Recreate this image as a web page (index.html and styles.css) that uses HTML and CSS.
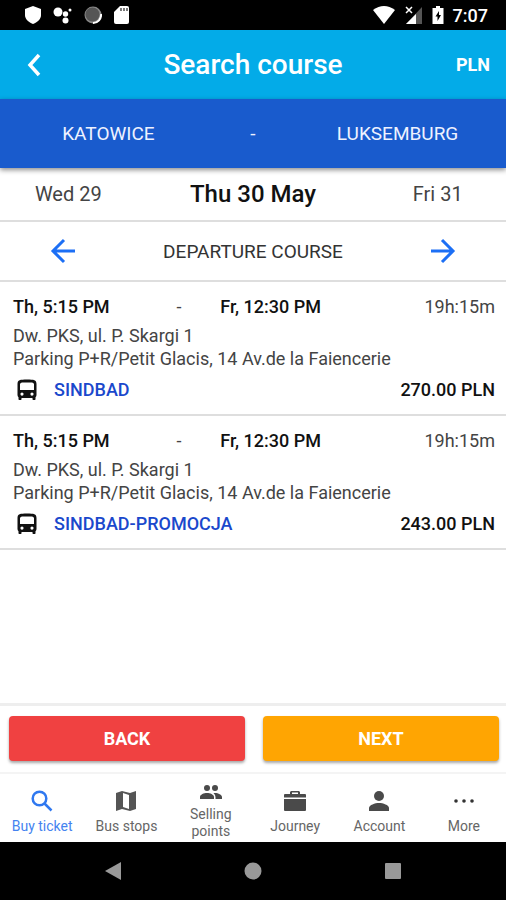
FILE: index.html
```html
<!DOCTYPE html>
<html lang="en">
<head>
<meta charset="utf-8">
<meta name="viewport" content="width=device-width, initial-scale=1">
<title>Search course</title>
<link rel="stylesheet" href="styles.css">
</head>
<body>
<div class="status">
  <div class="status-group">
    <svg width="18" height="20" viewBox="0 0 18 20"><path fill="#fff" d="M9 1l8 3v6c0 4-3 7-8 9-5-2-8-5-8-9V4z"/></svg>
    <svg width="20" height="18" viewBox="0 0 20 18"><g fill="#fff"><circle cx="5" cy="6" r="4.500"/><circle cx="12.500" cy="8" r="2.700"/><circle cx="17" cy="4" r="1.500"/><circle cx="12.500" cy="14.500" r="3"/></g></svg>
    <svg width="18" height="18" viewBox="0 0 18 18"><circle cx="9" cy="9" r="8.500" fill="#888"/><path d="M17 8a8 8 0 0 1-8 9" stroke="#fff" stroke-width="2" fill="none"/><circle cx="8.500" cy="8.500" r="7" fill="#555"/></svg>
    <svg width="18" height="20" viewBox="0 0 18 20"><path fill="#fff" d="M7 1h7q2 0 2 2v14q0 2-2 2H3q-2 0-2-2V7z"/><path stroke="#333" stroke-width="1.300" d="M8 3v3M11 3v3M14 3v3"/></svg>
  </div>
  <div class="status-group status-right">
    <svg width="24" height="20" viewBox="0 0 24 20"><path fill="#fff" d="M1 5q11-8 22 0L12 19z"/></svg>
    <svg width="18" height="20" viewBox="0 0 18 20"><path fill="#555" d="M17 2v17H1z"/><path fill="#fff" d="M11 9v10H1z"/><path stroke="#fff" stroke-width="1.500" d="M1 2l6 6M7 2L1 8"/></svg>
    <svg width="12" height="20" viewBox="0 0 12 20"><path fill="#fff" d="M4 1h4v2h3.500v16H.5V3H4z"/><path d="M7 6l-3.500 5.500h2V16L9 10H7z"/></svg>
    <span class="clock">7:07</span>
  </div>
</div>

<header class="header">
  <button class="header-back" aria-label="Go back"><svg width="16" height="24" viewBox="0 0 16 24"><path d="M13 2L4 12l9 10" fill="none" stroke="#fff" stroke-width="3.500"/></svg></button>
  <h1>Search course</h1>
  <button class="currency">PLN</button>
</header>

<div class="route"><span>KATOWICE</span><span>-</span><span>LUKSEMBURG</span></div>

<main>
  <nav class="dates" aria-label="Departure day">
    <button>Wed 29</button><button class="current">Thu 30 May</button><button>Fri 31</button>
  </nav>
  <div class="course">
    <button aria-label="Previous course"><svg width="26" height="26" viewBox="0 0 26 26"><path d="M25 13H3M14 2L3 13l11 11" fill="none" stroke="#1c6ff5" stroke-width="3"/></svg></button>
    <h2>DEPARTURE COURSE</h2>
    <button aria-label="Next course"><svg width="26" height="26" viewBox="0 0 26 26"><path d="M1 13h22M12 2l11 11-11 11" fill="none" stroke="#1c6ff5" stroke-width="3"/></svg></button>
  </div>

  <article class="trip">
    <div class="times"><b>Th, 5:15 PM</b><span class="dash">-</span><b>Fr, 12:30 PM</b><span class="duration">19h:15m</span></div>
    <p>Dw. PKS, ul. P. Skargi 1<br>Parking P+R/Petit Glacis, 14 Av.de la Faiencerie</p>
    <div class="fare">
      <svg width="20" height="22" viewBox="0 0 20 22"><path fill="#111" fill-rule="evenodd" d="M0.500 5C0.500 1 3 .5 10 .5s9.500.5 9.500 4.500v11q0 1.500-1 2.300v2q0 .7-.7.7h-1.600q-.7 0-.7-.7V19h-11v1.300q0 .7-.7.7H2.200q-.7 0-.7-.7v-2q-1-.8-1-2.300zM3 5v6h14V5q-.5-1.500-2-1.500H5Q3.500 3.500 3 5zM5 13.500a1.600 1.600 0 1 0 0 3.200 1.600 1.600 0 0 0 0-3.200zm10 0a1.600 1.600 0 1 0 0 3.200 1.600 1.600 0 0 0 0-3.200z"/></svg>
      <a href="#sindbad">SINDBAD</a><b>270.00 PLN</b>
    </div>
  </article>
  <article class="trip">
    <div class="times"><b>Th, 5:15 PM</b><span class="dash">-</span><b>Fr, 12:30 PM</b><span class="duration">19h:15m</span></div>
    <p>Dw. PKS, ul. P. Skargi 1<br>Parking P+R/Petit Glacis, 14 Av.de la Faiencerie</p>
    <div class="fare">
      <svg width="20" height="22" viewBox="0 0 20 22"><path fill="#111" fill-rule="evenodd" d="M0.500 5C0.500 1 3 .5 10 .5s9.500.5 9.500 4.500v11q0 1.500-1 2.300v2q0 .7-.7.7h-1.600q-.7 0-.7-.7V19h-11v1.300q0 .7-.7.7H2.200q-.7 0-.7-.7v-2q-1-.8-1-2.300zM3 5v6h14V5q-.5-1.500-2-1.500H5Q3.500 3.500 3 5zM5 13.500a1.600 1.600 0 1 0 0 3.200 1.600 1.600 0 0 0 0-3.200zm10 0a1.600 1.600 0 1 0 0 3.200 1.600 1.600 0 0 0 0-3.200z"/></svg>
      <a href="#promocja">SINDBAD-PROMOCJA</a><b>243.00 PLN</b>
    </div>
  </article>
</main>

<div class="actions"><button class="back">BACK</button><button class="next">NEXT</button></div>

<nav class="tabs" aria-label="Main">
  <a class="active" href="#buy"><svg width="22" height="22" viewBox="0 0 22 22"><g fill="none" stroke="#2f78f0" stroke-width="2.500"><circle cx="8.500" cy="8.500" r="6.800"/><path d="M13.500 13.500l7 7"/></g></svg><span>Buy ticket</span></a>
  <a href="#stops"><svg width="22" height="22" viewBox="0 0 22 22"><path fill="#555" fill-rule="evenodd" d="M1 3l6-2 8 2 6-2v18l-6 2-8-2-6 2zM8 3v14l6 2V5z"/></svg><span>Bus stops</span></a>
  <a href="#points"><svg width="24" height="16" viewBox="0 0 24 16"><g fill="#4a4a4a"><circle cx="8" cy="4" r="3"/><circle cx="16" cy="4" r="3"/><path d="M1 15v-2c0-2.500 4-4 7-4s7 1.500 7 4v2zM16.500 15v-2q0-2-2-3.900c4-.5 8.500 1.400 8.500 3.900v2z"/></g></svg><span>Selling<br>points</span></a>
  <a href="#journey"><svg width="22" height="22" viewBox="0 0 22 22"><path fill="#4a4a4a" d="M0 9h22v11q0 1-1 1H1q-1 0-1-1zM0 7.500V5q0-1 1-1h5V2l1-1h8l1 1v2h5q1 0 1 1v2.500zM8 4h6V2.500H8z"/></svg><span>Journey</span></a>
  <a href="#account"><svg width="22" height="22" viewBox="0 0 22 22"><g fill="#4a4a4a"><circle cx="11" cy="6" r="5"/><path d="M1 21v-3c0-3 6-5 10-5s10 2 10 5v3z"/></g></svg><span>Account</span></a>
  <a href="#more"><svg width="22" height="22" viewBox="0 0 22 22"><g fill="#333"><circle cx="3" cy="11" r="1.800"/><circle cx="11" cy="11" r="1.800"/><circle cx="19" cy="11" r="1.800"/></g></svg><span>More</span></a>
</nav>

<div class="system">
  <button aria-label="System back"><svg width="18" height="18" viewBox="0 0 18 18"><path fill="#999" d="M17 0v18L1 9z"/></svg></button>
  <button aria-label="Home"><svg width="18" height="18" viewBox="0 0 18 18"><circle cx="9" cy="9" r="8.500" fill="#999"/></svg></button>
  <button aria-label="Recent apps"><svg width="18" height="18" viewBox="0 0 18 18"><rect x="1" y="1" width="16" height="16" rx="1" fill="#999"/></svg></button>
</div>
</body>
</html>
```
FILE: styles.css
```css
* { box-sizing: border-box; }

body {
  margin: 0;
  min-height: 100vh;
  display: flex;
  flex-direction: column;
  background: #fff;
  color: #222;
  font: 18px/23px Roboto, "Liberation Sans", sans-serif;
}

button {
  padding: 0;
  border: 0;
  background: none;
  color: inherit;
  font: inherit;
}

a { color: inherit; text-decoration: none; }
b { font-weight: 500; color: #111; }
svg { display: block; flex: none; }

.status {
  display: flex;
  justify-content: space-between;
  align-items: center;
  height: 30px;
  padding: 0 18px 0 24px;
  background: #000;
  color: #fff;
}

.status-group { display: flex; align-items: center; gap: 11px; }
.status-right { gap: 9px; }
.clock { font-weight: 500; }

.header {
  display: grid;
  grid-template-columns: 1fr auto 1fr;
  align-items: center;
  height: 69px;
  padding: 0 16px;
  background: #03abe8;
  color: #fff;
}

.header h1 { margin: 0; font-size: 28px; line-height: 36px; font-weight: 500; }
.header-back { justify-self: start; padding: 0 10px; }
.currency { justify-self: end; font-weight: 700; }

.route {
  display: grid;
  grid-template-columns: 3fr 1fr 3fr;
  align-items: center;
  position: relative;
  height: 69px;
  background: #195bcd;
  color: #eef2ff;
  font-size: 19px;
  text-align: center;
  box-shadow: 0 2px 5px rgba(0, 0, 0, .45);
}

main { flex: 1; }

.dates, .course {
  display: grid;
  align-items: center;
  border-bottom: 2px solid #dedede;
  text-align: center;
}

.dates {
  grid-template-columns: 27fr 46fr 27fr;
  height: 54px;
  color: #444;
  font-size: 20px;
}

.dates .current { font-size: 24px; font-weight: 500; color: #111; }

.course { grid-template-columns: 1fr 2fr 1fr; height: 60px; }
.course button { justify-self: center; }
.course h2 { margin: 0; font-size: 19px; font-weight: 400; color: #333; }

.trip {
  padding: 13px 11px 13px 13px;
  border-bottom: 2px solid #dedede;
  color: #444;
}

.times { display: grid; grid-template-columns: 30fr 13fr 37fr 20fr; }
.dash { padding-left: 19px; }
.duration { text-align: right; }
.trip p { margin: 6px 0 8px; }

.fare { display: flex; align-items: center; padding-left: 4px; }
.fare a { margin-left: 17px; color: #1a48cc; font-weight: 500; }
.fare b { margin-left: auto; }

.actions {
  display: grid;
  grid-template-columns: 1fr 1fr;
  gap: 18px;
  padding: 10px 7px 11px 9px;
  border-top: 3px solid #eee;
}

.actions button {
  height: 45px;
  border-radius: 4px;
  color: #fff;
  font-weight: 700;
  box-shadow: 0 2px 3px rgba(0, 0, 0, .35);
}

.actions .back { background: #f04141; }
.actions .next { background: #ffa502; }

.tabs {
  display: grid;
  grid-template-columns: repeat(6, 1fr);
  height: 70px;
  border-top: 2px solid #f4f4f4;
  color: #666;
  font-size: 14px;
  line-height: 17px;
  text-align: center;
}

.tabs a {
  display: flex;
  flex-direction: column;
  align-items: center;
  justify-content: center;
  gap: 6px;
  padding-top: 8px;
}

.tabs .active { color: #4483f0; }

.system {
  display: grid;
  grid-template-columns: 1fr 1fr 1fr;
  align-items: center;
  justify-items: center;
  height: 58px;
  padding: 0 43px;
  background: #000;
}
```
